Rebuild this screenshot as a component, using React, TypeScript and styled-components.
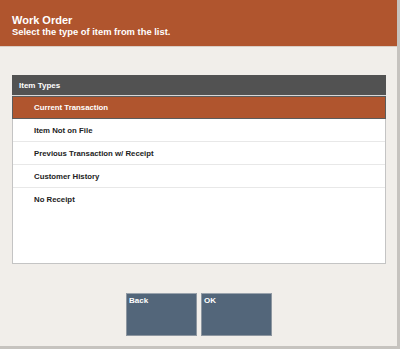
import * as React from "react";
import styled, { createGlobalStyle } from "styled-components";

const GlobalStyle = createGlobalStyle`
  html, body {
    margin: 0;
    padding: 0;
    background: #f1eeea;
    font-family: "Liberation Sans", Arial, sans-serif;
  }
`;

type RowProps = {
    $selected?: boolean;
}

const Frame = styled.div`
    box-sizing: border-box;
    width: 400px;
    height: 349px;
    background-color: #f1eeea;
    border-right: 3px solid #c6c3bf;
    border-bottom: 3px solid #c6c3bf;
    display: flex;
    flex-direction: column;
`;

const Header = styled.header`
    box-sizing: border-box;
    height: 47px;
    background-color: #b0552e;
    border-bottom: 1px solid #d9cdc5;
    color: white;
    padding: 14px 12px 0 12px;
    font-weight: bold;
`;

const Title = styled.div`
    font-size: 11px;
    line-height: 12px;
`;

const Subtitle = styled.div`
    font-size: 9.4px;
    line-height: 11px;
`;

const Body = styled.div`
    padding: 28px 11px 0 12px;
`;

const Panel = styled.section`
    box-sizing: border-box;
    height: 189px;
    background-color: white;
    border: 1px solid #c4c4c4;
    border-top: none;
    display: flex;
    flex-direction: column;
`;

const PanelTitle = styled.div`
    height: 20px;
    background-color: #525252;
    color: white;
    font-size: 8px;
    font-weight: bold;
    display: flex;
    align-items: center;
    padding-left: 7px;
    margin: 0 -1px;
    border-bottom: 1px solid #d8d8d8;
`;

const Row = styled.div<RowProps>`
    box-sizing: border-box;
    height: 23px;
    display: flex;
    align-items: center;
    padding-left: 21px;
    font-size: 7.8px;
    font-weight: bold;
    color: ${p => p.$selected ? "white" : "#222"};
    background-color: ${p => p.$selected ? "#b0552e" : "white"};
    border: ${p => p.$selected ? "1px solid #5c5c5c" : "none"};
    border-bottom: 1px solid ${p => p.$selected ? "#5c5c5c" : "#e8e8e8"};
    margin: ${p => p.$selected ? "0 -1px" : "0"};
    &:last-child { border-bottom: none; }
`;

const Footer = styled.div`
    display: flex;
    justify-content: center;
    gap: 4px;
    margin-top: 29px;
    padding-left: 1px;
`;

const Button = styled.button`
    box-sizing: border-box;
    width: 71px;
    height: 43px;
    background-color: #53667a;
    border: 1px solid #8d96a0;
    border-top-color: #9aa3ad;
    color: white;
    font-family: "Liberation Sans", Arial, sans-serif;
    font-size: 8px;
    font-weight: bold;
    text-align: left;
    display: flex;
    align-items: flex-start;
    padding: 2px 2px;
`;

const itemTypes = [
    "Current Transaction",
    "Item Not on File",
    "Previous Transaction w/ Receipt",
    "Customer History",
    "No Receipt",
];

const App: React.FC = () => {
    return (
        <>
            <GlobalStyle />
            <Frame>
                <Header>
                    <Title>Work Order</Title>
                    <Subtitle>Select the type of item from the list.</Subtitle>
                </Header>
                <Body>
                    <Panel>
                        <PanelTitle>Item Types</PanelTitle>
                        {itemTypes.map((t, i) => (
                            <Row key={t} $selected={i === 0}>{t}</Row>
                        ))}
                    </Panel>
                </Body>
                <Footer>
                    <Button>Back</Button>
                    <Button>OK</Button>
                </Footer>
            </Frame>
        </>
    );
}

export default App;
